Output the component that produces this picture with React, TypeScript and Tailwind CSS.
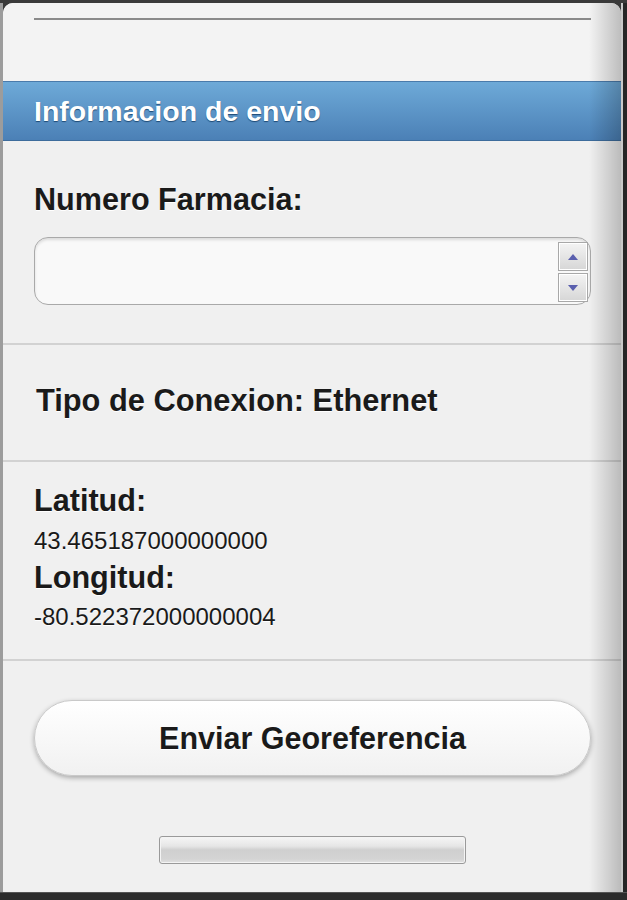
import React from "react";

function Spinner() {
  return (
    <div className="absolute right-[2px] top-[4px] flex h-[61px] w-[30px] flex-col gap-[2px]">
      <div className="flex h-[29px] items-center justify-center border border-[#a8a8a8] bg-[linear-gradient(#f4f4f4,#d6d6d6)] shadow-[inset_0_0_0_1px_#ffffff]">
        <svg width="10" height="6" viewBox="0 0 10 6">
          <path d="M5 0 L10 6 L0 6 Z" fill="#5a5fae" />
        </svg>
      </div>
      <div className="flex h-[29px] items-center justify-center border border-[#a8a8a8] bg-[linear-gradient(#f4f4f4,#d6d6d6)] shadow-[inset_0_0_0_1px_#ffffff]">
        <svg width="10" height="6" viewBox="0 0 10 6">
          <path d="M0 0 L10 0 L5 6 Z" fill="#5a5fae" />
        </svg>
      </div>
    </div>
  );
}

export default function App() {
  return (
    <div className="flex h-[900px] w-[627px] flex-col overflow-hidden bg-[#2c2c2c] font-['Liberation_Sans',Arial,sans-serif] text-[#1a1a1a]">
      <div className="flex h-[892px] bg-[#3a3a3a] pt-[3px]">
        <div className="w-[3px] bg-[#9c9c9c]" />
        <div className="relative flex w-[618px] flex-col overflow-hidden rounded-t-[10px] bg-[#f0f0f0]">
          {/* top area */}
          <div className="h-[78px] bg-[#f3f3f3] pt-[15px]">
            <div className="ml-[31px] mr-[30px] h-[2px] bg-[#8a8a8a]" />
          </div>
          {/* header */}
          <div className="h-[60px] border-t border-b border-t-[#4a7bab] border-b-[#3d6c9c] bg-[linear-gradient(#6eaad8,#4b80b6)] pl-[31px] text-[28.5px] font-bold leading-[58px] text-white [text-shadow:0_1px_1px_#1e4a75]">
            Informacion de envio
          </div>
          {/* numero farmacia */}
          <div className="px-[31px] pt-[40px] pb-[38px] [text-shadow:0_1px_0_#ffffff]">
            <div className="text-[30.6px] font-bold leading-[36px]">Numero Farmacia:</div>
            <div className="relative mt-[20px] h-[68px] w-[557px] rounded-[14px] border-[1.5px] border-[#a9a9a9] bg-[#f9f9f9] shadow-[inset_0_2px_3px_rgba(0,0,0,0.12)]">
              <Spinner />
            </div>
          </div>
          {/* tipo de conexion */}
          <div className="border-t-2 border-[#d2d2d2] pt-[38px] pb-[41px] pl-[33px] text-[30.8px] font-bold leading-[36px] [text-shadow:0_1px_0_#ffffff]">
            Tipo de Conexion: Ethernet
          </div>
          {/* coords */}
          <div className="border-t-2 border-[#d2d2d2] px-[31px] pt-[20px] pb-[27px] [text-shadow:0_1px_0_#ffffff]">
            <div className="text-[30.6px] font-bold leading-[36px]">Latitud:</div>
            <div className="mt-[8px] text-[24px] leading-[30px]">43.465187000000000</div>
            <div className="mt-[3px] text-[30.6px] font-bold leading-[36px]">Longitud:</div>
            <div className="mt-[7px] text-[24px] leading-[30px]">-80.522372000000004</div>
          </div>
          {/* button */}
          <div className="flex flex-1 flex-col border-t-2 border-[#d2d2d2] px-[31px] pt-[39px]">
            <div className="flex h-[76px] w-[557px] items-center justify-center rounded-full border border-[#c9c9c9] bg-[linear-gradient(#ffffff,#f1f1f1)] text-[30.5px] font-bold leading-[76px] shadow-[0_2px_5px_rgba(0,0,0,0.3)] [text-shadow:0_1px_0_#ffffff]">
              Enviar Georeferencia
            </div>
            <div className="ml-[125px] mt-[60px] h-[28px] w-[307px] rounded-[3px] border border-[#9a9a9a] bg-[linear-gradient(#f6f6f6_0%,#e6e6e6_35%,#cfcfcf_50%,#d4d4d4_85%,#e2e2e2_100%)] shadow-[inset_0_0_0_1px_#f4f4f4]" />
          </div>
          {/* right side shading */}
          <div className="pointer-events-none absolute inset-y-0 right-0 w-[32px] bg-[linear-gradient(to_right,rgba(0,0,0,0),rgba(0,0,0,0.22))]" />
        </div>
        <div className="w-[2px] bg-[#c9c9c9]" />
        <div className="w-[4px] bg-[#262626]" />
      </div>
      <div className="h-[1px] bg-[#555555]" />
    </div>
  );
}
